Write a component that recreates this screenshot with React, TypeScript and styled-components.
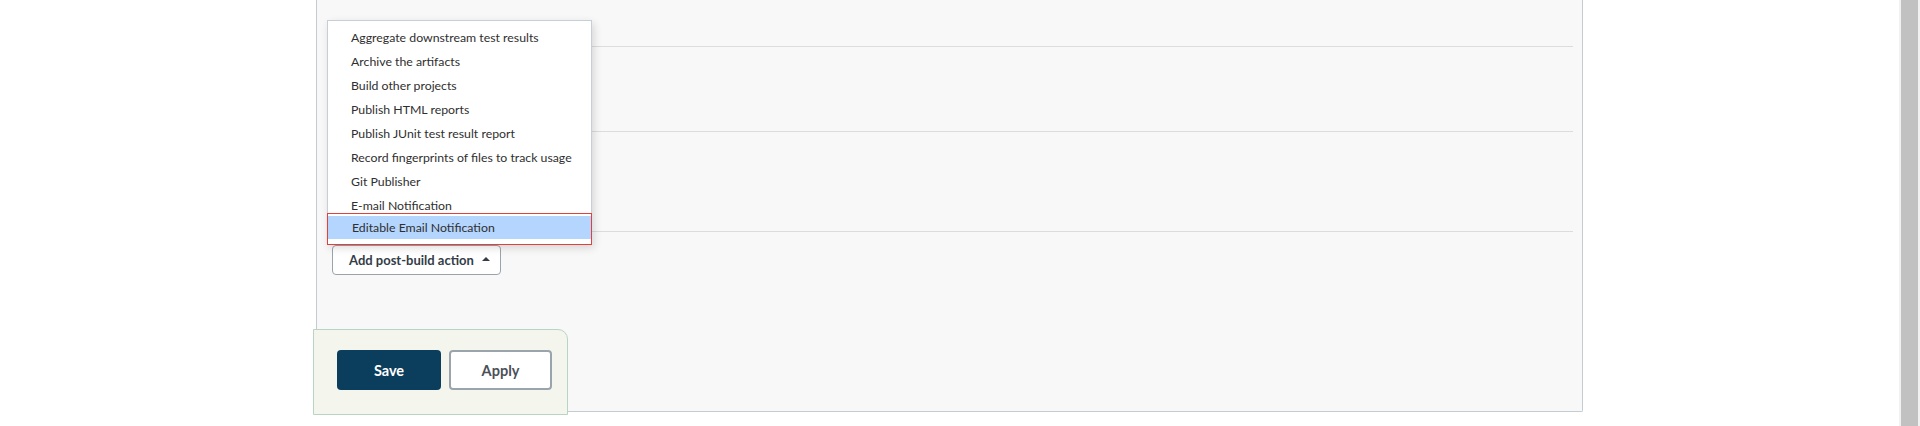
import { FC } from 'react'
import styled, { createGlobalStyle } from 'styled-components'

const Global = createGlobalStyle`
	html, body {
		margin: 0;
		padding: 0;
		background: #fff;
		overflow: hidden;
	}
	body {
		font-family: Lato, "Noto Sans", "Liberation Sans", sans-serif;
		color: #333;
	}
`

const Page = styled.div`
	display: flex;
	flex-direction: row;
	width: 1920px;
	height: 426px;
	background: #fff;
`

const Gutter = styled.div`
	flex: 0 0 316px;
`

const Panel = styled.div`
	position: relative;
	flex: 0 0 1267px;
	box-sizing: border-box;
	height: 412px;
	background: #f8f8f8;
	border: 1px solid #c4cbd1;
	border-top: none;
	border-radius: 0 0 2px 2px;
	padding: 0 9px 0 15px;
	display: flex;
	flex-direction: column;
`

const Section = styled.div<{ $h: number }>`
	flex: 0 0 ${p => p.$h}px;
	box-sizing: border-box;
	border-bottom: 1px solid #dcdcdc;
`

const AddButton = styled.button`
	align-self: flex-start;
	margin-top: 13px;
	margin-left: 0;
	height: 30px;
	width: 169px;
	box-sizing: border-box;
	padding: 0 0 0 16px;
	display: flex;
	align-items: center;
	gap: 8px;
	background: #fff;
	border: 1.5px solid #9ba4ad;
	border-radius: 4px;
	font-family: Lato, "Noto Sans", sans-serif;
	font-size: 13px;
	font-weight: 700;
	color: #333c47;
	cursor: pointer;
`

const Caret = styled.span`
	width: 0;
	height: 0;
	border-left: 4px solid transparent;
	border-right: 4px solid transparent;
	border-bottom: 4px solid #333c47;
	margin-top: -2px;
`

const Menu = styled.div`
	position: absolute;
	left: 10px;
	top: 20px;
	width: 265px;
	box-sizing: border-box;
	background: #fff;
	border: 1px solid #c6cfd8;
	box-shadow: 2px 3px 8px rgba(0, 0, 0, 0.14);
	padding-top: 4px;
	display: flex;
	flex-direction: column;
`

const Item = styled.div<{ $active?: boolean }>`
	height: ${p => (p.$active ? 23 : 24)}px;
	display: flex;
	align-items: center;
	padding-left: 23px;
	font-size: 12.3px;
	color: #2f2f2f;
	background: ${p => (p.$active ? '#b4d5fe' : 'transparent')};
	white-space: nowrap;
`

const Marked = styled.div`
	margin: -4px -1px -1px -1px;
	border: 1px solid #e2403a;
	padding: 2px 0 5px 0;
	& > div {
		padding-left: 24px;
	}
`

const Footer = styled.div`
	position: absolute;
	left: -4px;
	top: 329px;
	width: 255px;
	height: 86px;
	box-sizing: border-box;
	background: #f4f6ee;
	border: 1px solid #b9d4c2;
	border-radius: 0 10px 0 0;
	display: flex;
	align-items: flex-start;
	gap: 8px;
	padding: 20px 0 0 23px;
`

const ActionButton = styled.button<{ $primary?: boolean }>`
	width: ${p => (p.$primary ? 104 : 103)}px;
	height: 40px;
	box-sizing: border-box;
	border-radius: 4px;
	font-family: Lato, "Noto Sans", sans-serif;
	font-size: 14.5px;
	font-weight: 700;
	cursor: pointer;
	background: ${p => (p.$primary ? '#0b3d5d' : '#fff')};
	color: ${p => (p.$primary ? '#fff' : '#4b5058')};
	border: ${p => (p.$primary ? 'none' : '2px solid #9aa4ad')};
`

const Spacer = styled.div`
	flex: 1;
`

const Scrollbar = styled.div`
	flex: 0 0 21px;
	background: #f1f1f1;
	display: flex;
	padding: 0 2px;
	box-sizing: border-box;
`

const Thumb = styled.div`
	flex: 1;
	background: #c1c1c1;
`

const actions = [
	'Aggregate downstream test results',
	'Archive the artifacts',
	'Build other projects',
	'Publish HTML reports',
	'Publish JUnit test result report',
	'Record fingerprints of files to track usage',
	'Git Publisher',
	'E-mail Notification',
]

const App: FC = () => {
	return (
		<>
			<Global />
			<Page>
				<Gutter />
				<Panel>
					<Section $h={47} />
					<Section $h={85} />
					<Section $h={100} />
					<AddButton>
						Add post-build action
						<Caret />
					</AddButton>

					<Menu>
						{actions.map(a => <Item key={a}>{a}</Item>)}
						<Marked>
							<Item $active>Editable Email Notification</Item>
						</Marked>
					</Menu>

					<Footer>
						<ActionButton $primary>Save</ActionButton>
						<ActionButton>Apply</ActionButton>
					</Footer>
				</Panel>
				<Spacer />
				<Scrollbar>
					<Thumb />
				</Scrollbar>
			</Page>
		</>
	)
}

export default App
